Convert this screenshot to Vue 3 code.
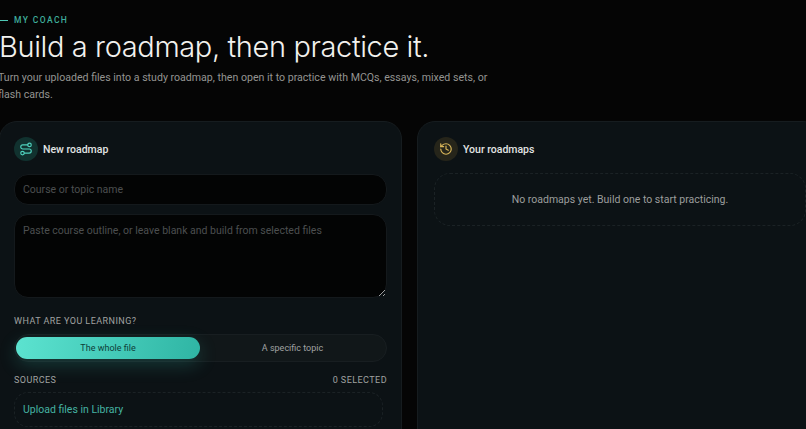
<script setup>
import { ref } from 'vue';

const scope = ref('whole');
</script>

<template>
  <div class="page">
    <div class="eyebrow"><span class="dash"></span>MY COACH</div>
    <h1>Build a roadmap, then practice it.</h1>
    <p class="intro">Turn your uploaded files into a study roadmap, then open it to practice with MCQs, essays, mixed sets, or flash cards.</p>

    <div class="columns">
      <section class="card">
        <div class="card-head">
          <span class="badge teal">
            <svg viewBox="0 0 24 24" width="14" height="14" fill="none" stroke="currentColor" stroke-width="2" stroke-linecap="round" stroke-linejoin="round">
              <circle cx="6" cy="19" r="3" />
              <path d="M9 19h8.5a3.5 3.5 0 0 0 0-7h-11a3.5 3.5 0 0 1 0-7H15" />
              <circle cx="18" cy="5" r="3" />
            </svg>
          </span>
          <h2>New roadmap</h2>
        </div>
        <input class="field" type="text" placeholder="Course or topic name" />
        <textarea class="field area" placeholder="Paste course outline, or leave blank and build from selected files"></textarea>

        <div class="label learning">WHAT ARE YOU LEARNING?</div>
        <div class="toggle">
          <button :class="{ active: scope === 'whole' }" @click="scope = 'whole'">The whole file</button>
          <button :class="{ active: scope === 'topic' }" @click="scope = 'topic'">A specific topic</button>
        </div>

        <div class="label sources"><span>SOURCES</span><span>0 SELECTED</span></div>
        <div class="upload">Upload files in Library</div>
      </section>

      <section class="card">
        <div class="card-head">
          <span class="badge gold">
            <svg viewBox="0 0 24 24" width="14" height="14" fill="none" stroke="currentColor" stroke-width="2" stroke-linecap="round" stroke-linejoin="round">
              <path d="M3 12a9 9 0 1 0 9-9 9.75 9.75 0 0 0-6.74 2.74L3 8" />
              <path d="M3 3v5h5" />
              <path d="M12 7v5l4 2" />
            </svg>
          </span>
          <h2>Your roadmaps</h2>
        </div>
        <div class="empty">No roadmaps yet. Build one to start practicing.</div>
      </section>
    </div>
  </div>
</template>

<style>
  html, body {
    background: #050505;
    overflow: hidden;
  }
</style>

<style scoped>
  .page {
    box-sizing: border-box;
    width: 822px;
    height: 429px;
    margin-left: -1px;
    padding-top: 14px;
    overflow: hidden;
    font-family: Roboto, "Noto Sans", sans-serif;
    color: #e8e8e8;
  }
  .eyebrow {
    display: flex;
    align-items: center;
    gap: 6px;
    height: 12px;
    margin-left: 1px;
    font-size: 8.5px;
    font-weight: 500;
    letter-spacing: 1.4px;
    color: #3fae9c;
  }
  .dash {
    width: 8px;
    height: 1px;
    background: #4fc9b5;
  }
  h1 {
    margin: 3px 0 0;
    font-family: Inter, sans-serif;
    font-size: 29px;
    line-height: 36px;
    font-weight: 300;
    letter-spacing: -0.38px;
    color: #f2f1ee;
  }
  .intro {
    width: 495px;
    margin: 4px 0 0 -1px;
    font-size: 10.6px;
    line-height: 17px;
    color: #949491;
  }
  .columns {
    display: flex;
    gap: 15px;
    margin-top: 18px;
  }
  .card {
    box-sizing: border-box;
    width: 403px;
    height: 340px;
    padding: 15px 14px 0;
    flex: none;
    background: #0c1215;
    border: 1px solid #161c1f;
    border-radius: 18px;
  }
  .card + .card {
    width: 404px;
    padding-left: 16px;
  }
  .card-head {
    display: flex;
    align-items: center;
    gap: 5px;
    height: 24px;
  }
  h2 {
    margin: 0;
    font-size: 10.5px;
    font-weight: 500;
    color: #e2e4e3;
  }
  .badge {
    display: flex;
    align-items: center;
    justify-content: center;
    width: 24px;
    height: 24px;
    border-radius: 50%;
  }
  .teal {
    color: #4fd1bd;
    background: #11322f;
  }
  .gold {
    color: #d9b75a;
    background: #26251a;
  }
  .field {
    display: block;
    box-sizing: border-box;
    width: 373px;
    height: 31px;
    margin-top: 13px;
    padding: 0 8px;
    font-family: inherit;
    font-size: 10.5px;
    color: #ddd;
    background: #030404;
    border: 1px solid #14191c;
    border-radius: 14px;
    outline: none;
  }
  .field::placeholder {
    color: #4c4f50;
    opacity: 1;
  }
  .area {
    height: 84px;
    margin-top: 9px;
    padding: 9px 8px;
    line-height: 14px;
    resize: vertical;
  }
  .label {
    font-size: 9px;
    letter-spacing: 0.45px;
    line-height: 12px;
    color: #a0a2a1;
  }
  .learning {
    margin-top: 17px;
  }
  .toggle {
    box-sizing: border-box;
    display: grid;
    grid-template-columns: 184px 1fr;
    width: 373px;
    height: 28px;
    margin-top: 7px;
    padding: 2px 1px;
    background: #111719;
    border: 1px solid #181e21;
    border-radius: 14px;
  }
  .toggle button {
    padding: 0;
    font-family: inherit;
    font-size: 9px;
    color: #a0a2a1;
    background: none;
    border: 0;
    border-radius: 12px;
  }
  .toggle .active {
    color: #0e3d38;
    background: linear-gradient(100deg, #5ce3d0, #2fb5a4);
    box-shadow: 0 6px 18px rgba(60, 200, 180, 0.22);
  }
  .sources {
    display: flex;
    justify-content: space-between;
    width: 373px;
    margin-top: 12px;
  }
  .upload {
    box-sizing: border-box;
    width: 369px;
    height: 35px;
    margin-top: 6px;
    padding: 0 8px;
    font-size: 10.5px;
    line-height: 33px;
    color: #45b3a3;
    border: 1px dashed #1b2225;
    border-radius: 14px;
  }
  .empty {
    box-sizing: border-box;
    width: 372px;
    height: 53px;
    margin-top: 12px;
    font-size: 10.5px;
    line-height: 51px;
    text-align: center;
    color: #9c9e9d;
    border: 1px dashed #1b2225;
    border-radius: 16px;
  }
</style>
